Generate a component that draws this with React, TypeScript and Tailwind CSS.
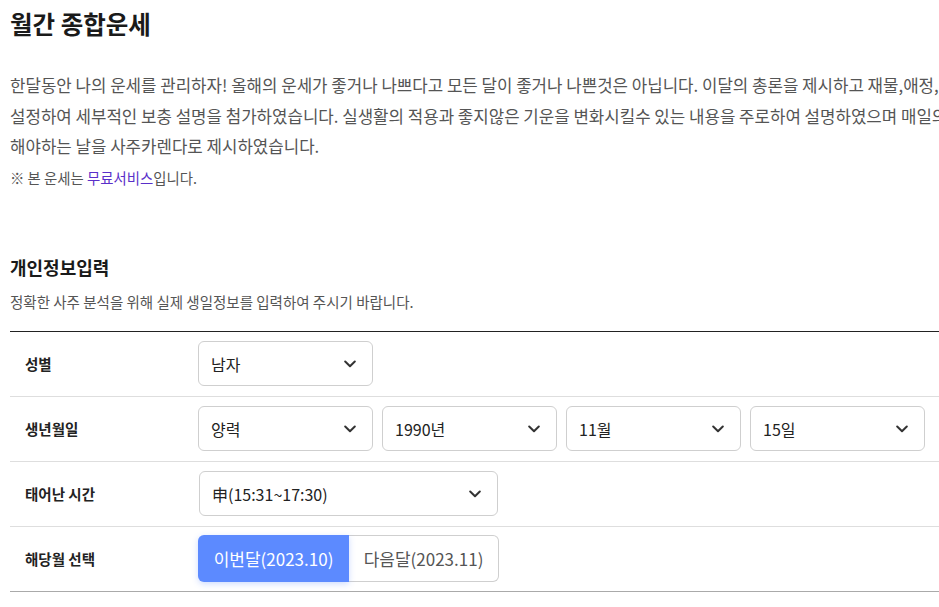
import type { ReactNode } from "react";

const font = { fontFamily: '"Noto Sans CJK KR", "Noto Sans", sans-serif' };

function Chevron() {
  return (
    <svg width="12" height="8" viewBox="0 0 12 8" fill="none" className="shrink-0">
      <polyline points="1.2,1.5 6,6.2 10.8,1.5" stroke="#333" strokeWidth="2" strokeLinecap="round" strokeLinejoin="round" />
    </svg>
  );
}

function Select({ value, width = "w-[175px]" }: { value: string; width?: string }) {
  return (
    <div className={`${width} h-[45px] flex items-center justify-between pl-[12px] pr-[16px] border border-[#cfcfcf] rounded-[6px] bg-white text-[16px] text-[#222]`}>
      <span>{value}</span>
      <Chevron />
    </div>
  );
}

function Row({ label, children }: { label: string; children: ReactNode }) {
  return (
    <div className="flex items-center h-[65px] border-b border-[#dedede]">
      <div className="w-[188px] pl-[15px] text-[14.5px] font-bold text-[#222]">{label}</div>
      <div className="flex items-center gap-[9px]">{children}</div>
    </div>
  );
}

export default function App() {
  return (
    <div className="w-full h-[607px] overflow-hidden bg-white" style={font}>
      <div className="w-[1200px] pl-[10px]">
        <h1 className="pt-[6px] text-[24.5px] font-bold text-[#1a1a1a] leading-[36px]">월간 종합운세</h1>

        <p className="mt-[28px] text-[16.8px] leading-[30.5px] text-[#555] whitespace-nowrap">
          한달동안 나의 운세를 관리하자! 올해의 운세가 좋거나 나쁘다고 모든 달이 좋거나 나쁜것은 아닙니다. 이달의 총론을 제시하고 재물,애정,건강,직장 등의 항목을
          <br />
          설정하여 세부적인 보충 설명을 첨가하였습니다. 실생활의 적용과 좋지않은 기운을 변화시킬수 있는 내용을 주로하여 설명하였으며 매일의 길흉과 주의
          <br />
          해야하는 날을 사주카렌다로 제시하였습니다.
        </p>
        <p className="mt-[5px] text-[14.4px] leading-[22px] text-[#555]">
          ※ 본 운세는 <span className="text-[#5a2fc9]">무료서비스</span>입니다.
        </p>

        <h2 className="mt-[65px] text-[18px] font-bold text-[#1a1a1a] leading-[26px]">개인정보입력</h2>
        <p className="mt-[12px] text-[14.5px] text-[#555] leading-[20px]">정확한 사주 분석을 위해 실제 생일정보를 입력하여 주시기 바랍니다.</p>

        <div className="mt-[19px] w-[929px] border-t border-[#222]">
          <Row label="성별">
            <Select value="남자" />
          </Row>
          <Row label="생년월일">
            <Select value="양력" />
            <Select value="1990년" />
            <Select value="11월" />
            <Select value="15일" />
          </Row>
          <Row label="태어난 시간">
            <div className="pl-[1px]">
              <Select value="申(15:31~17:30)" width="w-[299px]" />
            </div>
          </Row>
          <div className="flex items-center h-[65px] border-b border-[#aaa]">
            <div className="w-[188px] pl-[15px] text-[14.5px] font-bold text-[#222]">해당월 선택</div>
            <div className="flex items-center">
              <button className="w-[151px] h-[47px] rounded-l-[6px] bg-[#5c8aff] text-white text-[17px] shadow-[0_2px_6px_rgba(92,138,255,0.3)] relative z-10">
                이번달(2023.10)
              </button>
              <button className="w-[150px] h-[47px] rounded-r-[6px] border border-l-0 border-[#cfcfcf] bg-white text-[#555] text-[17px]">
                다음달(2023.11)
              </button>
            </div>
          </div>
        </div>
      </div>
    </div>
  );
}
